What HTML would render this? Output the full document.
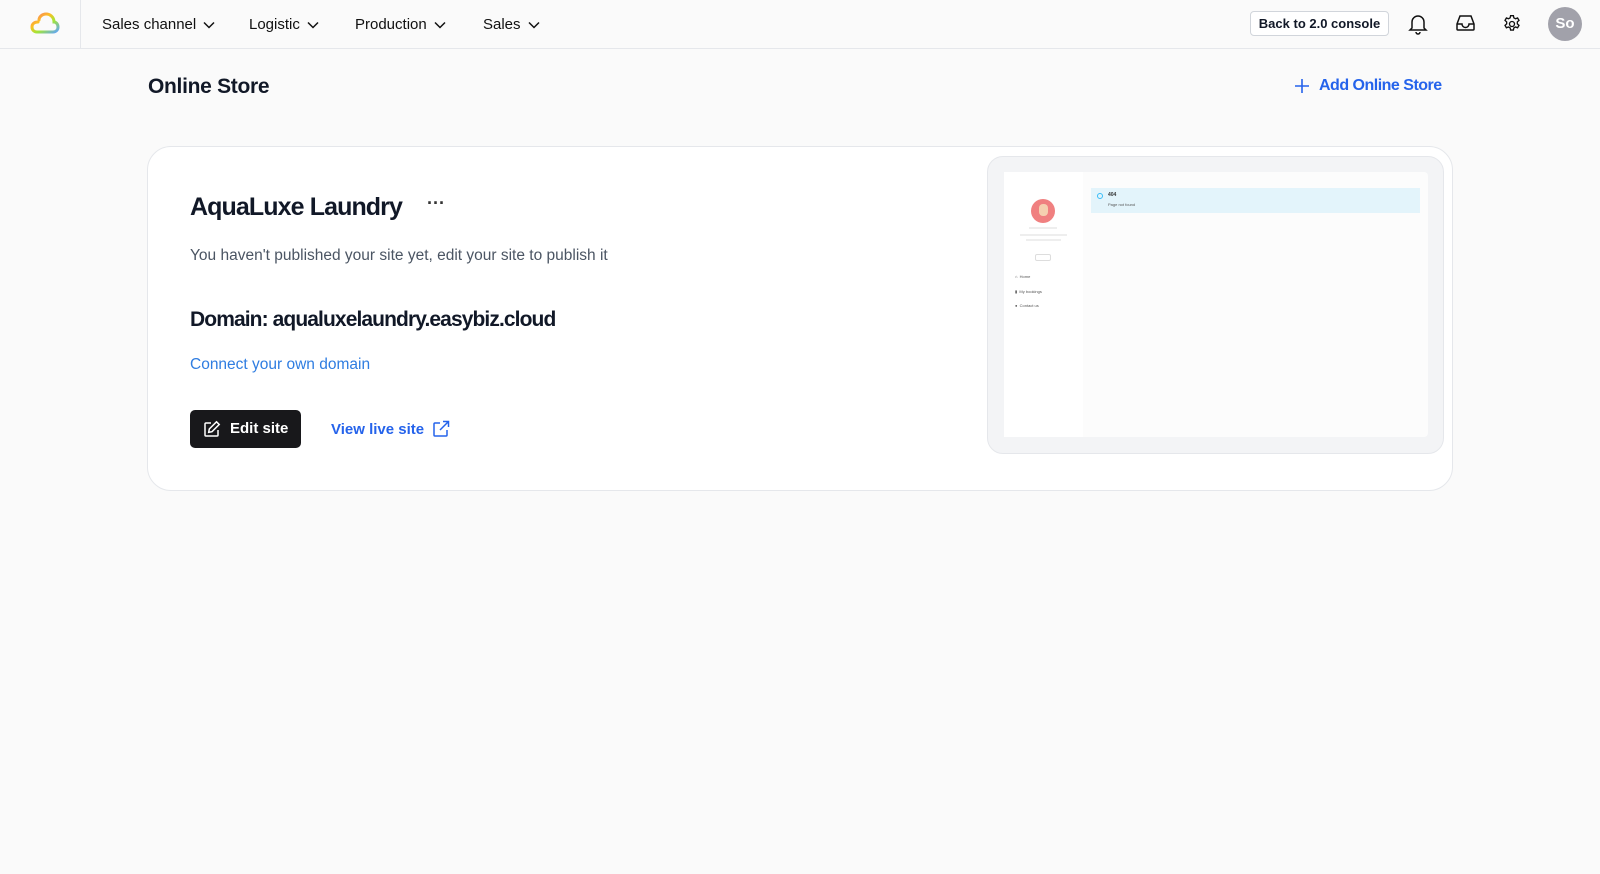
<!DOCTYPE html>
<html><head><meta charset="utf-8"><style>
*{box-sizing:border-box;margin:0;padding:0}
body{width:1600px;height:874px;background:#fafafa;font-family:"Liberation Sans",Arial,sans-serif;color:#111827;position:relative;overflow:hidden}
.abs{position:absolute}
.nav{position:absolute;left:0;top:0;width:1600px;height:49px;background:#fafafa;border-bottom:1px solid #e5e7eb}
.ni{position:absolute;top:16px;font-size:15px;color:#111;white-space:nowrap}
.ni svg{vertical-align:middle;margin-left:7px}
.card{position:absolute;left:147px;top:146px;width:1306px;height:345px;background:#fff;border:1px solid #e5e7eb;border-radius:24px}
</style></head><body>
<div class="nav">
 <svg class="abs" style="left:29px;top:11px" width="32" height="24" viewBox="0 0 32 24"><defs><linearGradient id="g" x1="0" y1="0" x2="1" y2="1"><stop offset="0" stop-color="#f87171"/><stop offset=".35" stop-color="#fbbf24"/><stop offset=".6" stop-color="#a3e635"/><stop offset="1" stop-color="#60a5fa"/></linearGradient></defs><path d="M9 11 C5 11 3 13 3 16 C3 19 5 21 8 21 L24 21 C27 21 29 19 29 16 C29 13 27 11 25 11 C25 6 21 3 17 3 C13 3 10 6 10 9" fill="none" stroke="url(#g)" stroke-width="3" stroke-linecap="round"/></svg>
 <div class="abs" style="left:80px;top:0;width:1px;height:48px;background:#e5e7eb"></div>
 <div class="ni" style="left:102px">Sales channel<svg width="12" height="8" viewBox="0 0 12 8"><path d="M1 1.5l5 5 5-5" fill="none" stroke="#111" stroke-width="1.5"/></svg></div>
 <div class="ni" style="left:249px">Logistic<svg width="12" height="8" viewBox="0 0 12 8"><path d="M1 1.5l5 5 5-5" fill="none" stroke="#111" stroke-width="1.5"/></svg></div>
 <div class="ni" style="left:355px">Production<svg width="12" height="8" viewBox="0 0 12 8"><path d="M1 1.5l5 5 5-5" fill="none" stroke="#111" stroke-width="1.5"/></svg></div>
 <div class="ni" style="left:483px">Sales<svg width="12" height="8" viewBox="0 0 12 8"><path d="M1 1.5l5 5 5-5" fill="none" stroke="#111" stroke-width="1.5"/></svg></div>
 <div class="abs" style="left:1250px;top:11px;width:139px;height:25px;border:1px solid #d1d5db;border-radius:4px;background:#fff;font-size:13px;font-weight:bold;text-align:center;line-height:23px">Back to 2.0 console</div>
 <svg class="abs" style="left:1408px;top:13px" width="20" height="22" viewBox="0 0 20 22" fill="none" stroke="#111" stroke-width="1.5"><path d="M4 15V9a6 6 0 0112 0v6l2 2H2z"/><path d="M8 19a2 2 0 004 0"/></svg>
 <svg class="abs" style="left:1455px;top:13px" width="21" height="20" viewBox="0 0 21 20" fill="none" stroke="#111" stroke-width="1.5"><path d="M2 11l3-8h11l3 8v5a1 1 0 01-1 1H3a1 1 0 01-1-1z"/><path d="M2 11h5a3.5 3.5 0 007 0h5"/></svg>
 <svg class="abs" style="left:1502px;top:14px" width="20" height="20" viewBox="0 0 24 24" fill="none" stroke="#111" stroke-width="1.6"><circle cx="12" cy="12" r="3"/><path d="M10.3 2h3.4l.5 2.6 2 1.1 2.5-.9 1.7 2.9-2 1.8v2.3l2 1.8-1.7 2.9-2.5-.9-2 1.1-.5 2.6h-3.4l-.5-2.6-2-1.1-2.5.9-1.7-2.9 2-1.8V9.5l-2-1.8 1.7-2.9 2.5.9 2-1.1z"/></svg>
 <div class="abs" style="left:1548px;top:7px;width:34px;height:34px;border-radius:50%;background:#a1a1aa;color:#fff;font-size:15px;font-weight:bold;text-align:center;line-height:34px">So</div>
</div>
<div class="abs" style="left:148px;top:75px;font-size:21px;font-weight:bold;letter-spacing:-0.3px">Online Store</div>
<svg class="abs" style="left:1294px;top:78px" width="16" height="16" viewBox="0 0 16 16"><path d="M8 1v14M1 8h14" stroke="#2563eb" stroke-width="1.6"/></svg>
<div class="abs" style="left:1319px;top:77px;font-size:16px;font-weight:bold;color:#2563eb;letter-spacing:-0.5px">Add Online Store</div>
<div class="card">
 <div class="abs" style="left:42px;top:46px;font-size:25px;font-weight:bold;letter-spacing:-0.9px">AquaLuxe Laundry</div>
 <div class="abs" style="left:279px;top:46px;font-size:18px;font-weight:bold;color:#333">···</div>
 <div class="abs" style="left:42px;top:100px;font-size:15.5px;color:#4b5563">You haven't published your site yet, edit your site to publish it</div>
 <div class="abs" style="left:42px;top:161px;font-size:21px;font-weight:bold;letter-spacing:-0.9px">Domain: aqualuxelaundry.easybiz.cloud</div>
 <div class="abs" style="left:42px;top:209px;font-size:15.5px;color:#2f7de1">Connect your own domain</div>
 <div class="abs" style="left:42px;top:263px;width:111px;height:38px;background:#18181b;border-radius:5px;color:#fff;font-size:15px;font-weight:bold;line-height:38px;padding-left:40px">Edit site</div>
 <svg class="abs" style="left:55px;top:273px" width="18" height="18" viewBox="0 0 18 18" fill="none" stroke="#fff" stroke-width="1.5"><path d="M8 3H3a1 1 0 00-1 1v11a1 1 0 001 1h11a1 1 0 001-1v-5"/><path d="M13.5 1.8l2.7 2.7L9 11.7l-3.3.6.6-3.3z"/></svg>
 <div class="abs" style="left:183px;top:274px;font-size:15px;font-weight:bold;color:#2563eb">View live site</div>
 <svg class="abs" style="left:284px;top:273px" width="18" height="18" viewBox="0 0 18 18" fill="none" stroke="#2563eb" stroke-width="1.5"><path d="M8 3H3a1 1 0 00-1 1v11a1 1 0 001 1h11a1 1 0 001-1v-5"/><path d="M11 1.5h5.5V7M16.5 1.5L8 10"/></svg>
</div>
<div class="abs" style="left:987px;top:156px;width:457px;height:298px;background:#f3f4f6;border:1px solid #e5e7eb;border-radius:16px"></div>
<div class="abs" style="left:1004px;top:172px;width:424px;height:265px;background:#fcfcfc;border-radius:4px"></div>
<div class="abs" style="left:1004px;top:172px;width:79px;height:265px;background:#fff"></div>
<div class="abs" style="left:1031px;top:199px;width:24px;height:24px;border-radius:50%;background:#f08080"></div>
<div class="abs" style="left:1039px;top:204px;width:9px;height:12px;border-radius:4px;background:#f5d0b0"></div>
<div class="abs" style="left:1029px;top:227px;width:28px;height:2px;background:#eee"></div>
<div class="abs" style="left:1020px;top:234px;width:47px;height:2px;background:#eee"></div>
<div class="abs" style="left:1026px;top:239px;width:35px;height:2px;background:#eee"></div>
<div class="abs" style="left:1035px;top:254px;width:16px;height:7px;border:1px solid #ddd;border-radius:2px"></div>
<div class="abs" style="left:1015px;top:270px;font-size:4px;color:#555;line-height:14.5px">⌂ &nbsp;Home<br>▮ &nbsp;My bookings<br>● &nbsp;Contact us</div>
<div class="abs" style="left:1091px;top:188px;width:329px;height:25px;background:#e3f4fb"></div>
<div class="abs" style="left:1097px;top:193px;width:6px;height:6px;border:1px solid #38bdf8;border-radius:50%"></div>
<div class="abs" style="left:1108px;top:192px;font-size:5px;font-weight:bold;color:#333">404</div>
<div class="abs" style="left:1108px;top:202px;font-size:4px;color:#555">Page not found</div>
</body></html>
